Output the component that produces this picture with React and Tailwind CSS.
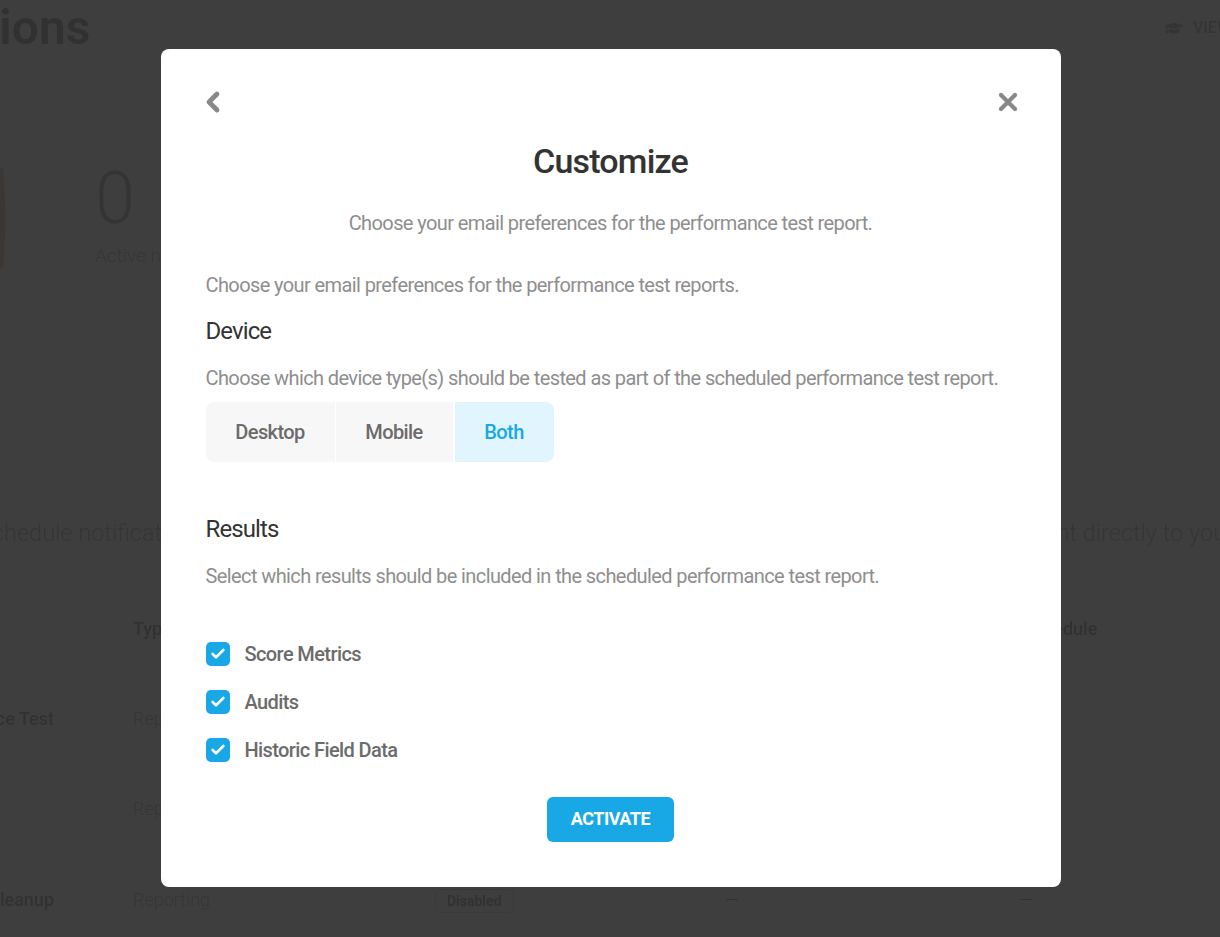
import { Check, ChevronLeft, X } from "lucide-react";
import { FaGraduationCap } from "react-icons/fa";

const rows = [
    { name: "Performance Test", type: "Reporting" },
    { name: "", type: "Reporting" },
    { name: "Database Cleanup", type: "Reporting", status: "Disabled" },
];

const results = ["Score Metrics", "Audits", "Historic Field Data"];

const Background = () => (
    <div className="h-[937px] overflow-hidden bg-[#f8f8f8] text-[#c4c4c4] blur-[0.4px]">
        <div className="flex h-[56px] items-center justify-between">
            <h1 className="-ml-[186px] text-[48px] leading-none font-semibold whitespace-nowrap text-[#c4c4c4]">Notifications</h1>
            <div className="-mr-[30px] flex w-[85px] items-center gap-[10px] text-[16px] font-medium text-[#d0d0d0]">
                <FaGraduationCap size={18} />
                <span>VIEW</span>
            </div>
        </div>
        <div className="mt-[96px] flex h-[120px] items-start">
            <svg width="6" height="100" viewBox="0 0 6 100" className="mt-[16px]">
                <path d="M0 0 C3 25 3 75 0 100" fill="none" stroke="#f0dccb" strokeWidth="6" />
            </svg>
            <div className="ml-[89px] pt-[2px]">
                <div className="text-[72px] leading-[90px] font-light text-[#d0d0d0]">0</div>
                <div className="text-[19px] leading-[24px] font-light whitespace-nowrap text-[#d4d4d4]">Active notifications</div>
            </div>
        </div>
        <div className="mt-[246px] flex justify-between text-[23.5px] leading-[30px] font-light whitespace-nowrap text-[#d2d2d2]">
            <span className="-ml-[22px]">Schedule notifications</span>
            <span className="-mr-[14px]">sent directly to your</span>
        </div>
        <div className="mt-[67px] grid grid-cols-[133px_302px_290px_298px_1fr] text-[18px]">
            <div />
            <div className="font-medium">Type</div>
            <div />
            <div />
            <div className="font-medium">Schedule</div>
        </div>
        <div className="mt-[62.5px] flex flex-col gap-[64.5px]">
            {rows.map((row, i) => (
                <div key={i} className="grid h-[26px] grid-cols-[133px_302px_290px_298px_1fr] items-center text-[18px]">
                    <div className="flex justify-end pr-[79px] font-medium whitespace-nowrap">{row.name}</div>
                    <div className="font-light text-[#d4d4d4]">{row.type}</div>
                    {row.status ? (
                        <>
                            <div><span className="rounded-md border border-[#e4e4e4] px-[11px] py-[3px] text-[14px] font-bold">{row.status}</span></div>
                            <div className="font-light text-[#c0c0c0]">—</div>
                            <div className="-ml-[4px] font-light text-[#c0c0c0]">—</div>
                        </>
                    ) : null}
                </div>
            ))}
        </div>
    </div>
);

const Modal = () => (
    <div className="flex h-[838px] w-[900px] flex-col rounded-lg bg-white px-[45px] pt-[37px] text-[#8e8e8e]">
        <div className="flex h-[32px] items-center justify-between">
            <ChevronLeft size={32} strokeWidth={3.6} className="-ml-[9px] text-[#888]" />
            <X size={28} strokeWidth={3.6} className="-mr-[6px] text-[#888]" />
        </div>
        <h2 className="mt-[22px] text-center text-[34px] leading-[42px] font-medium tracking-[-0.8px] text-[#333]">Customize</h2>
        <p className="mt-[26px] text-center text-[20px] leading-[30px] tracking-[-0.6px]">Choose your email preferences for the performance test report.</p>
        <p className="mt-[32px] text-[20px] leading-[30px] tracking-[-0.6px]">Choose your email preferences for the performance test reports.</p>
        <h3 className="mt-[16px] text-[24px] leading-[30px] font-normal tracking-[-0.9px] text-[#333]">Device</h3>
        <p className="mt-[17px] text-[20px] leading-[30px] tracking-[-0.6px]">Choose which device type(s) should be tested as part of the scheduled performance test report.</p>
        <div className="mt-[9px] flex h-[60px] w-[348px] text-[20px] font-medium tracking-[-0.6px] text-[#6b6b6b]">
            <button className="w-[129px] rounded-l-lg bg-[#f7f7f7]">Desktop</button>
            <button className="ml-px w-[117px] bg-[#f7f7f7]">Mobile</button>
            <button className="ml-[2px] w-[99px] rounded-r-lg bg-[#e0f5fe] text-[#18a8e5]">Both</button>
        </div>
        <h3 className="mt-[52px] text-[24px] leading-[30px] font-normal tracking-[-0.9px] text-[#333]">Results</h3>
        <p className="mt-[17px] text-[20px] leading-[30px] tracking-[-0.6px]">Select which results should be included in the scheduled performance test report.</p>
        <div className="mt-[51px] flex flex-col gap-[24px]">
            {results.map((label) => (
                <label key={label} className="flex h-[24px] items-center gap-[15px] text-[20px] font-medium tracking-[-0.6px] text-[#6b6b6b]">
                    <span className="flex h-[24px] w-[24px] items-center justify-center rounded-[5px] bg-[#18a8e5]">
                        <Check size={16} strokeWidth={4} className="text-white" />
                    </span>
                    {label}
                </label>
            ))}
        </div>
        <button className="mx-auto mt-[35px] h-[45px] w-[127px] rounded-md bg-[#18a8e5] pb-[2px] text-[18px] font-bold tracking-[-0.5px] text-white">ACTIVATE</button>
    </div>
);

const App = () => {
    return (
        <div className="relative h-[937px] overflow-hidden font-['Roboto',sans-serif]">
            <Background />
            <div className="absolute inset-0 flex items-center justify-center bg-black/75 pb-px pl-px">
                <Modal />
            </div>
        </div>
    );
};

export default App;
